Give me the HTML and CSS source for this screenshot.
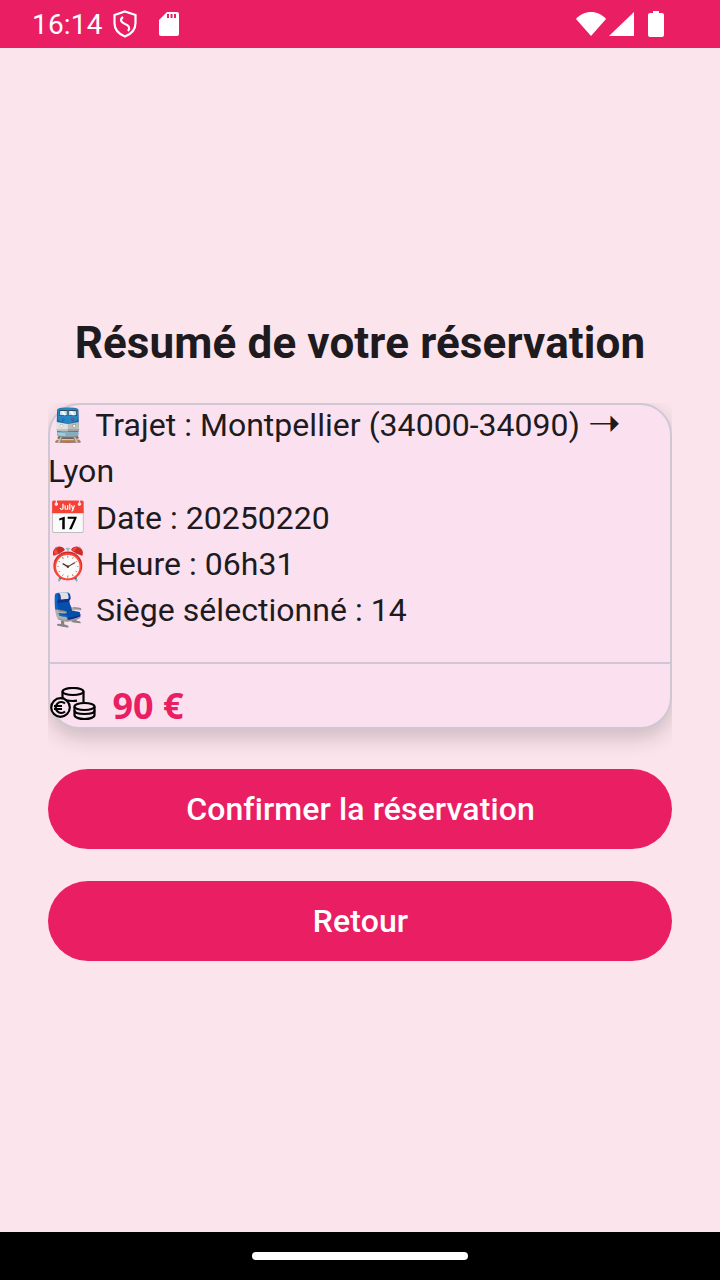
FILE: index.html
```html
<!DOCTYPE html>
<html lang="fr">
<head>
<meta charset="utf-8">
<title>Résumé de votre réservation</title>
<link rel="stylesheet" href="styles.css">
</head>
<body>
<header class="status">
  <div class="status-left">
    <span class="time">16:14</span>
    <svg class="ic-shield" viewBox="0 0 24 28" width="24" height="28"><path d="M12 1.500 22.500 5V13c0 6-4.200 11-10.500 13.500C5.700 24 1.500 19 1.500 13V5Z" fill="none" stroke="#fff" stroke-width="2.200"/><path d="M10 7C6.500 9.500 8 12.500 12 14s5.500 4 3 7" fill="none" stroke="#fff" stroke-width="2.200"/></svg>
    <svg class="ic-sd" viewBox="0 0 20 24" width="20" height="24"><path d="M8 0H18a2 2 0 0 1 2 2V22a2 2 0 0 1-2 2H2a2 2 0 0 1-2-2V8Z" fill="#fff"/><path class="sd-slot" d="M8 2h2v4H8zM11.500 2h2v4h-2zM15 2h2v4h-2z"/></svg>
  </div>
  <div class="status-right">
    <svg class="ic-wifi" viewBox="0 0 30 24" width="30" height="24"><path d="M0 7C8-2.300 22-2.300 30 7L15 24Z" fill="#fff"/></svg>
    <svg class="ic-signal" viewBox="0 0 25 24" width="25" height="24"><path d="M25 0V24H0Z" fill="#fff"/></svg>
    <svg class="ic-battery" viewBox="0 0 16 26" width="16" height="26"><path d="M5 0h6v2h3a2 2 0 0 1 2 2V24a2 2 0 0 1-2 2H2a2 2 0 0 1-2-2V4a2 2 0 0 1 2-2h3Z" fill="#fff"/></svg>
  </div>
</header>
<main class="main">
  <h1 class="title">Résumé de votre réservation</h1>
  <div class="card-clip">
    <section class="card">
      <p class="details">🚆 Trajet : Montpellier (34000-34090) <span class="arrow">➝</span> Lyon<br>📅 Date : 20250220<br>⏰ Heure : 06h31<br>💺 Siège sélectionné : 14</p>
      <hr class="rule">
      <div class="price">
        <svg class="coins" viewBox="0 0 46 35" width="46" height="35" fill="none" stroke="#000" stroke-width="2.200">
          <ellipse cx="23" cy="4.500" rx="10.500" ry="3.500"/>
          <path d="M12.500 4.500V19M33.500 4.500V15M12.500 10.500c1 2 5 3.500 10.500 3.500 2 0 3-.2 4-.4"/>
          <circle class="coin-face" cx="10.500" cy="20.500" r="9.300"/>
          <path d="M15 16.500a5.500 5.500 0 1 0 0 8M4 19H12M4 22H12"/>
          <path class="coin-face" d="M24.500 19.500V28c0 2.300 4.500 4 10 4s10-1.700 10-4V19.500"/>
          <ellipse class="coin-face" cx="34.500" cy="19.500" rx="10" ry="3.500"/>
          <path d="M24.500 23.500c0 2.300 4.500 3.500 10 3.500s10-1.200 10-3.500"/>
        </svg>
        <span class="amount">90 €</span>
      </div>
    </section>
  </div>
  <button class="btn">Confirmer la réservation</button>
  <button class="btn">Retour</button>
</main>
<footer class="nav"><span class="pill"></span></footer>
</body>
</html>
```

FILE: styles.css
```css
* { box-sizing: border-box; }
html, body { margin: 0; height: 100%; }
body {
  display: flex;
  flex-direction: column;
  height: 1280px;
  background: #fce4ec;
  font-family: Roboto, "Noto Sans", sans-serif;
  color: #1d1b20;
}
.status {
  height: 48px;
  flex: none;
  background: #e91e63;
  display: flex;
  justify-content: space-between;
  align-items: center;
  padding: 0 56px 0 32px;
  color: #fff;
}
.status-left, .status-right { display: flex; align-items: center; }
.time { font-size: 28px; letter-spacing: .2px; }
.ic-shield { margin-left: 10px; }
.ic-sd { margin-left: 22px; }
.sd-slot { fill: #e91e63; }
.ic-signal { margin-left: 3px; }
.ic-battery { margin-left: 14px; }
.main {
  flex: 1;
  display: flex;
  flex-direction: column;
  justify-content: center;
  padding: 0 48px;
}
.title {
  margin: 1px 0 36px;
  font-size: 44px;
  line-height: 47px;
  letter-spacing: .12px;
  font-weight: 700;
  text-align: center;
}
.card-clip {
  overflow: hidden;
  padding-bottom: 28px;
  margin-bottom: 12px;
}
.card {
  height: 326px;
  background: #fbe1ef;
  border: 2px solid #cfc8d4;
  border-radius: 32px;
  box-shadow: 0 8px 22px rgba(0,0,0,.2);
}
.details {
  margin: -2.700px 0 0 -2px;
  font-size: 32px;
  line-height: 46.150px;
  letter-spacing: .03px;
  height: 259.700px;
}
.arrow { display: inline-block; font-size: 39px; line-height: 1; }
.rule { margin: 0; border: 0; height: 2px; background: #cfc8d4; }
.price { display: flex; align-items: center; height: 61px; padding-top: 22px; }
.coins { flex: none; margin-top: -2px; }
.coin-face { fill: #fbe1ef; }
.amount { margin-left: 16.500px; font-size: 36px; font-weight: 700; color: #e91e63; font-family: "Noto Sans", sans-serif; }
.btn {
  height: 80px;
  margin-bottom: 32px;
  padding: 0 0 0 1px;
  border: 0;
  border-radius: 40px;
  background: #e91e63;
  color: #fff;
  font: 500 32px Roboto, sans-serif;
  letter-spacing: .1px;
}
.btn:last-child { margin-bottom: 0; }
.nav {
  height: 48px;
  flex: none;
  background: #000;
  display: flex;
  justify-content: center;
  align-items: center;
}
.pill { width: 216px; height: 8px; border-radius: 4px; background: #fff; }
```
